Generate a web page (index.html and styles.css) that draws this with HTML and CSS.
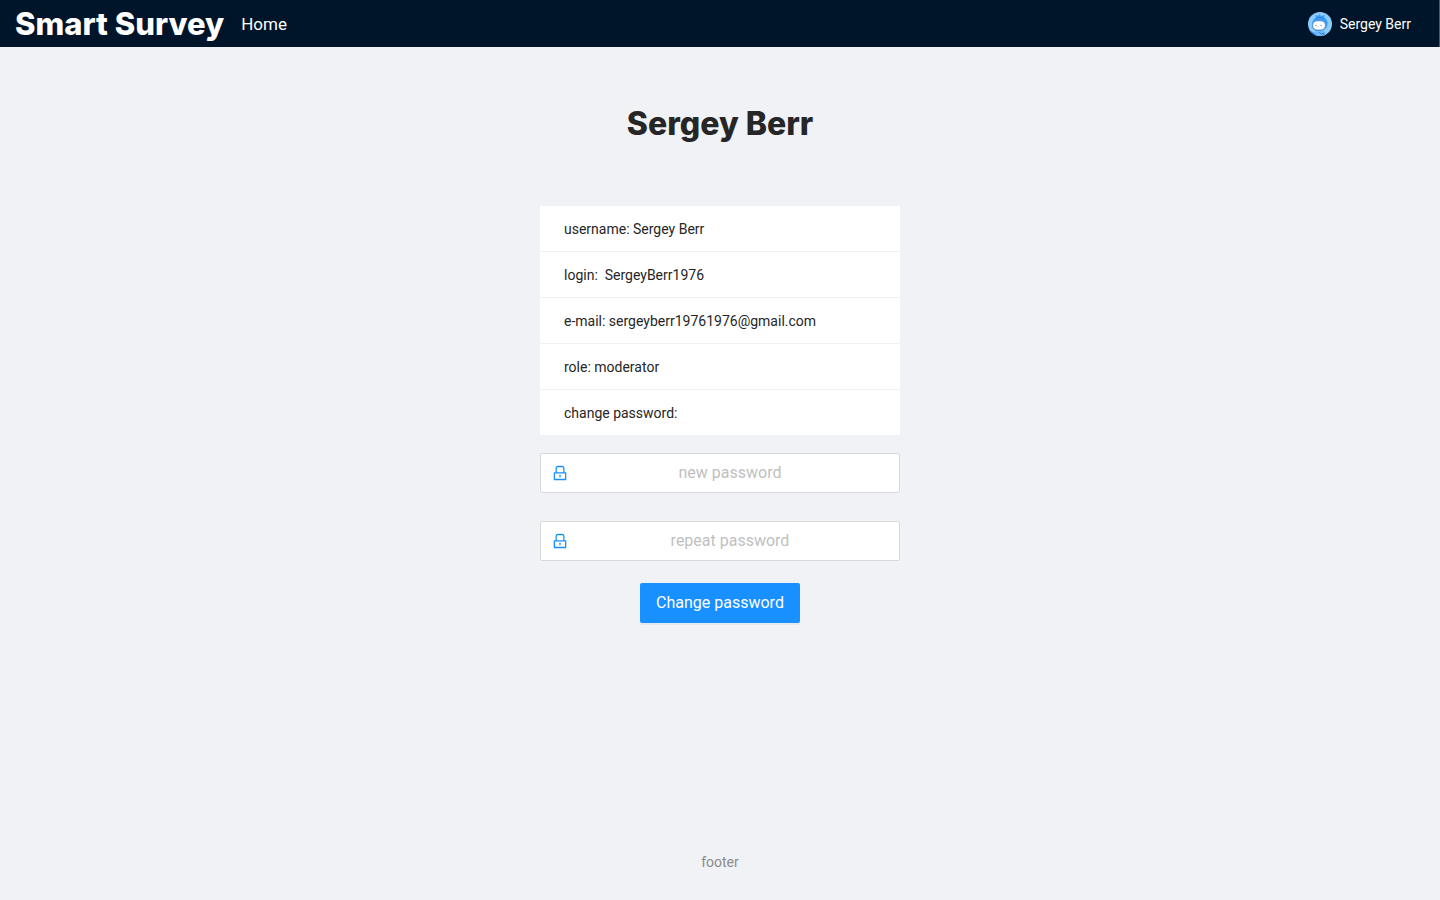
FILE: index.html
```html
<!DOCTYPE html>
<html lang="en">
<head>
<meta charset="utf-8">
<meta name="viewport" content="width=device-width, initial-scale=1">
<title>Smart Survey</title>
<link rel="stylesheet" href="styles.css">
</head>
<body>
<header class="topbar">
  <a class="brand" href="#">Smart Survey</a>
  <nav class="nav"><a class="nav-link" href="#">Home</a></nav>
  <button class="account" type="button">
    <svg class="avatar" viewBox="0 0 24 24" aria-hidden="true">
      <defs><clipPath id="disc"><circle cx="12" cy="12" r="12"/></clipPath></defs>
      <g clip-path="url(#disc)">
        <rect width="24" height="24" fill="#8dccff"/>
        <path d="M5 24c0-3.500 3-6 7-6s6 2.500 6 6z" fill="#6fb8fa"/>
        <path d="M7 3l3 1 1-2 2 2 4-1-1 2.500c3 1.500 4 4 3.500 7-.5 4-3.500 6.500-8.500 6.500S3.500 16.500 4 12C4.300 9 5.500 7 8 5.500z" fill="#3c9df4"/>
        <path d="M8 6.500c2-1.500 6-1.500 8 .5" fill="none" stroke="#2678d8" stroke-width=".8"/>
        <rect x="4.500" y="8.800" width="13" height="9.200" rx="4.600" fill="#fff" stroke="#4c78bd" stroke-width=".7"/>
        <circle cx="8" cy="13.500" r=".6" fill="#44669f"/><circle cx="13" cy="13.500" r=".6" fill="#44669f"/>
        <path d="M10 14.500h1" stroke="#7792bd" stroke-width=".6"/>
        <path d="M3 19l4 2.500 2 2.500H3z" fill="#3490ee"/>
        <path d="M11 20l2 2 3-1-1 3" fill="none" stroke="#3478d4" stroke-width=".9"/>
      </g>
    </svg>
    <span>Sergey Berr</span>
  </button>
</header>
<main class="content">
  <h1 class="title">Sergey Berr</h1>
  <section class="profile">
    <ul class="details">
      <li class="detail">username: Sergey Berr</li>
      <li class="detail">login: &nbsp;SergeyBerr1976</li>
      <li class="detail">e-mail: sergeyberr19761976@gmail.com</li>
      <li class="detail">role: moderator</li>
      <li class="detail">change password:</li>
    </ul>
    <form class="form">
      <label class="field">
        <svg class="lock" viewBox="64 64 896 896" aria-hidden="true"><path d="M832 464h-68V240c0-70.700-57.300-128-128-128H388c-70.700 0-128 57.300-128 128v224h-68c-17.700 0-32 14.300-32 32v384c0 17.700 14.300 32 32 32h640c17.700 0 32-14.300 32-32V496c0-17.700-14.300-32-32-32zM332 240c0-30.900 25.100-56 56-56h248c30.900 0 56 25.100 56 56v224H332V240zm460 600H232V536h560v304zM484 701v53c0 4.400 3.600 8 8 8h40c4.400 0 8-3.600 8-8v-53a48.010 48.010 0 10-56 0z"/></svg>
        <input class="input" type="password" placeholder="new password" aria-label="new password" autocomplete="new-password">
      </label>
      <label class="field">
        <svg class="lock" viewBox="64 64 896 896" aria-hidden="true"><path d="M832 464h-68V240c0-70.700-57.300-128-128-128H388c-70.700 0-128 57.300-128 128v224h-68c-17.700 0-32 14.300-32 32v384c0 17.700 14.300 32 32 32h640c17.700 0 32-14.300 32-32V496c0-17.700-14.300-32-32-32zM332 240c0-30.900 25.100-56 56-56h248c30.900 0 56 25.100 56 56v224H332V240zm460 600H232V536h560v304zM484 701v53c0 4.400 3.600 8 8 8h40c4.400 0 8-3.600 8-8v-53a48.010 48.010 0 10-56 0z"/></svg>
        <input class="input" type="password" placeholder="repeat password" aria-label="repeat password" autocomplete="new-password">
      </label>
      <button class="submit" type="button">Change password</button>
    </form>
  </section>
</main>
<footer class="footer">footer</footer>
</body>
</html>
```
FILE: styles.css
```css
* { box-sizing: border-box; }
body {
  margin: 0;
  min-height: 100vh;
  display: flex;
  flex-direction: column;
  background: #f0f2f5;
  color: #262626;
  font: 14px/22px Roboto, sans-serif;
}
.topbar {
  display: flex;
  align-items: center;
  gap: 17px;
  height: 47px;
  padding: 0 28px 0 15px;
  background: #001529;
  border-right: 1px solid #4d5b69;
}
.brand {
  color: #fff;
  font: 800 31px/47px Inter, sans-serif;
  text-decoration: none;
}
.nav-link {
  color: #fff;
  font-size: 17px;
  line-height: 24px;
  text-decoration: none;
}
.account {
  display: flex;
  align-items: center;
  gap: 8px;
  margin-left: auto;
  padding: 0;
  border: 0;
  background: none;
  color: #fff;
  font: inherit;
  cursor: pointer;
}
.avatar { width: 24px; height: 24px; }
.content {
  flex: 1;
  display: flex;
  flex-direction: column;
  align-items: center;
  padding: 56px 24px 24px;
}
.title {
  margin: 0 0 62px;
  font: 800 32px/41px Inter, sans-serif;
}
.profile { width: 100%; max-width: 360px; }
.details {
  list-style: none;
  margin: 0 0 18px;
  padding: 0;
  background: #fff;
}
.detail { padding: 12px 24px 11px; }
.detail + .detail { border-top: 1px solid #f0f0f0; }
.form {
  display: flex;
  flex-direction: column;
  align-items: center;
}
.field {
  display: flex;
  align-items: center;
  gap: 4px;
  width: 100%;
  height: 40px;
  margin-bottom: 28px;
  padding: 0 11px;
  background: #fff;
  border: 1px solid #d9d9d9;
  border-radius: 2px;
}
.field + .submit { margin-top: -6px; }
.field:focus-within { border-color: #1890ff; }
.lock { flex: none; width: 16px; height: 16px; fill: #1890ff; }
.input {
  flex: 1;
  min-width: 0;
  padding: 0;
  border: 0;
  outline: 0;
  background: none;
  color: inherit;
  font: 16px/24px Roboto, sans-serif;
  text-align: center;
}
.input::placeholder { color: #bfbfbf; opacity: 1; }
.submit {
  height: 40px;
  padding: 0 16px;
  border: 0;
  border-radius: 2px;
  background: #1890ff;
  box-shadow: 0 2px 0 rgba(0, 0, 0, .04);
  color: #fff;
  font: 16px/24px Roboto, sans-serif;
  cursor: pointer;
}
.footer {
  padding: 0 24px 27px;
  color: #8c8c8c;
  text-align: center;
}
```
